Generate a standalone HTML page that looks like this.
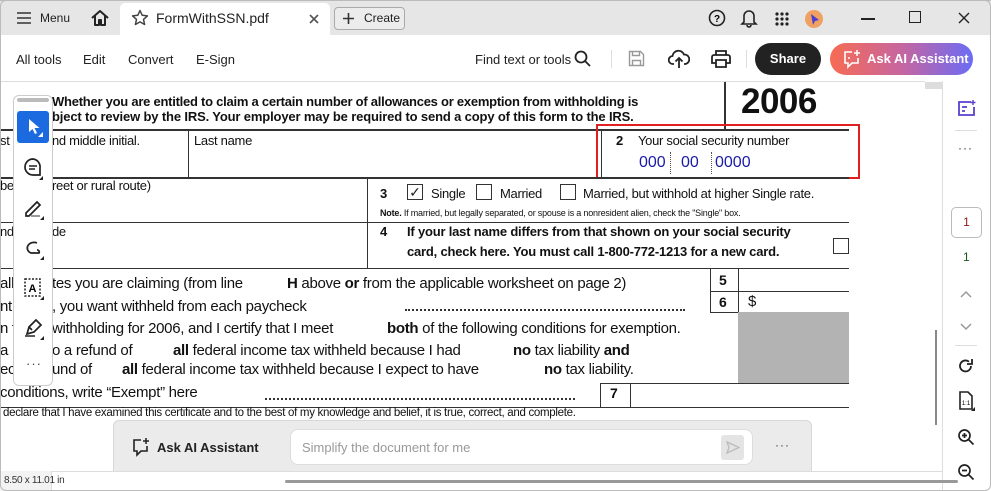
<!DOCTYPE html>
<html><head><meta charset="utf-8"><style>
*{box-sizing:border-box;margin:0;padding:0}
body{width:991px;height:491px;overflow:hidden;background:#fff;font-family:"Liberation Sans",sans-serif;position:relative;color:#222}
.a{position:absolute;white-space:nowrap}
.t{font-size:13px;color:#222}
.d{font-size:14px;color:#111;letter-spacing:-0.3px}
.b{font-weight:bold}
.hl{position:absolute;background:#333;height:1px}
.vl{position:absolute;background:#333;width:1px}
.ic{position:absolute}
</style></head><body>
<!-- title bar -->
<div class="a" style="left:0;top:0;width:991px;height:35px;background:#e6e6e6;border-top:1px solid #bbb"></div>
<svg class="ic" style="left:16px;top:12px" width="16" height="12"><path d="M1 1h14M1 6h14M1 11h14" stroke="#333" stroke-width="1.6"/></svg>
<div class="a t" style="left:40px;top:11px;font-size:12px">Menu</div>
<svg class="ic" style="left:90px;top:9px" width="20" height="18"><path d="M2 9L10 2l8 7M5 7v9h4v-5h2v5h4V7" fill="none" stroke="#222" stroke-width="2" stroke-linejoin="round"/></svg>
<div class="a" style="left:120px;top:3px;width:210px;height:32px;background:#fff;border-radius:5px 5px 0 0"></div>
<svg class="ic" style="left:131px;top:9px" width="18" height="18"><path d="M9 1.5l2.2 4.8 5.2.6-3.9 3.5 1.1 5.1L9 12.9l-4.6 2.6 1.1-5.1L1.6 6.9l5.2-.6z" fill="none" stroke="#444" stroke-width="1.5" stroke-linejoin="round"/></svg>
<div class="a t" style="left:156px;top:10px;font-size:14px">FormWithSSN.pdf</div>
<svg class="ic" style="left:309px;top:14px" width="10" height="10"><path d="M1 1l8 8M9 1l-8 8" stroke="#555" stroke-width="1.6"/></svg>
<div class="a" style="left:334px;top:7px;width:71px;height:23px;border:1px solid #aaa;border-radius:4px;background:#ececec"></div>
<svg class="ic" style="left:343px;top:13px" width="11" height="11"><path d="M5.5 0v11M0 5.5h11" stroke="#333" stroke-width="1.6"/></svg>
<div class="a t" style="left:364px;top:11px;font-size:12px">Create</div>
<svg class="ic" style="left:708px;top:9px" width="18" height="18"><circle cx="9" cy="9" r="7.5" fill="none" stroke="#222" stroke-width="1.6"/><text x="9" y="13" font-size="10" font-weight="bold" text-anchor="middle" font-family="Liberation Sans">?</text></svg>
<svg class="ic" style="left:740px;top:8px" width="18" height="20"><path d="M4 14V8a5 5 0 0110 0v6l2 2H2zM7 17a2 2 0 004 0" fill="none" stroke="#222" stroke-width="1.6"/></svg>
<svg class="ic" style="left:775px;top:12px" width="14" height="14" fill="#222"><circle cx="2" cy="2" r="1.6"/><circle cx="7" cy="2" r="1.6"/><circle cx="12" cy="2" r="1.6"/><circle cx="2" cy="7" r="1.6"/><circle cx="7" cy="7" r="1.6"/><circle cx="12" cy="7" r="1.6"/><circle cx="2" cy="12" r="1.6"/><circle cx="7" cy="12" r="1.6"/><circle cx="12" cy="12" r="1.6"/></svg>
<div class="a" style="left:805px;top:10px;width:18px;height:18px;border-radius:50%;background:#f0a060"><svg width="18" height="18"><path d="M6 4l8 6-4 1-2 4z" fill="#4a3fd0"/></svg></div>
<div class="a" style="left:861px;top:18px;width:14px;height:1.5px;background:#222"></div>
<div class="a" style="left:909px;top:11px;width:12px;height:12px;border:1.5px solid #222"></div>
<svg class="ic" style="left:958px;top:12px" width="12" height="12"><path d="M1 1l10 10M11 1L1 11" stroke="#222" stroke-width="1.4"/></svg>
<!-- toolbar -->
<div class="a t" style="left:16px;top:52px">All tools</div>
<div class="a t" style="left:83px;top:52px">Edit</div>
<div class="a t" style="left:128px;top:52px">Convert</div>
<div class="a t" style="left:196px;top:52px">E-Sign</div>
<div class="a t" style="left:475px;top:52px">Find text or tools</div>
<svg class="ic" style="left:574px;top:50px" width="18" height="18"><circle cx="7" cy="7" r="5.5" fill="none" stroke="#222" stroke-width="1.8"/><path d="M11 11l5 5" stroke="#222" stroke-width="1.8"/></svg>
<div class="a" style="left:611px;top:50px;width:1px;height:18px;background:#ddd"></div>
<svg class="ic" style="left:628px;top:50px" width="17" height="17"><path d="M1.5 1.5h11l3 3v11h-14z M4.5 1.5v4h7v-4M4.5 15.5v-5h8v5" fill="none" stroke="#999" stroke-width="1.4"/></svg>
<svg class="ic" style="left:668px;top:49px" width="22" height="20"><path d="M6 15H5a4 4 0 01-.5-8A6 6 0 0116 5.5a4.5 4.5 0 011 9.5h-1M11 19V9M7.5 12.5L11 9l3.5 3.5" fill="none" stroke="#222" stroke-width="1.8"/></svg>
<svg class="ic" style="left:711px;top:50px" width="20" height="18"><path d="M5 5V1h10v4M3 5h14a2 2 0 012 2v6h-4M5 13H1V7a2 2 0 012-2M5 10h10v7H5z" fill="none" stroke="#222" stroke-width="1.8"/></svg>
<div class="a" style="left:746px;top:50px;width:1px;height:18px;background:#ddd"></div>
<div class="a" style="left:755px;top:43px;width:66px;height:32px;border-radius:16px;background:#222;color:#fff;font-size:13px;font-weight:bold;text-align:center;line-height:32px">Share</div>
<div class="a" style="left:830px;top:43px;width:143px;height:32px;border-radius:16px;background:linear-gradient(90deg,#f76b52,#c666a0,#6b6cf5);color:#fff;font-size:13px;font-weight:bold;line-height:32px;padding-left:37px">Ask AI Assistant</div>
<svg class="ic" style="left:842px;top:49px" width="20" height="20"><path d="M10 3H3v11h3v4l4-4h6v-5" fill="none" stroke="#fff" stroke-width="1.6"/><path d="M15 1v6M12 4h6" stroke="#fff" stroke-width="1.5"/><circle cx="7" cy="9" r="1" fill="#fff"/></svg>
<div class="a" style="left:0;top:81px;width:925px;height:1px;background:#ddd"></div>
<!-- document -->
<div class="a d b" style="left:52px;top:94px;font-size:13px;letter-spacing:-0.25px">Whether you are entitled to claim a certain number of allowances or exemption from withholding is</div>
<div class="a d b" style="left:52px;top:109px;font-size:13px;letter-spacing:-0.15px">bject to review by the IRS. Your employer may be required to send a copy of this form to the IRS.</div>
<div class="vl" style="left:724px;top:82px;height:48px;width:2px"></div>
<div class="a b" style="left:741px;top:82px;font-size:35px;color:#111;letter-spacing:-0.5px">2006</div>
<div class="hl" style="left:0;top:129px;width:849px;height:2px"></div>
<div class="a d" style="left:0;top:133px;font-size:13px">st</div>
<div class="a d" style="left:52px;top:133px;font-size:13px">nd middle initial.</div>
<div class="vl" style="left:188px;top:130px;height:47px"></div>
<div class="a d" style="left:194px;top:133px;font-size:13px">Last name</div>
<div class="vl" style="left:601px;top:130px;height:47px"></div>
<div class="a d b" style="left:616px;top:133px;font-size:13px">2</div>
<div class="a d" style="left:638px;top:133px;font-size:13px">Your social security number</div>
<div class="a" style="left:639px;top:154px;font-size:16px;color:#1a1aa8">000</div>
<div class="a" style="left:681px;top:154px;font-size:16px;color:#1a1aa8">00</div>
<div class="a" style="left:715px;top:154px;font-size:16px;color:#1a1aa8">0000</div>
<div class="a" style="left:670px;top:152px;height:22px;border-left:1px dotted #555"></div>
<div class="a" style="left:711px;top:152px;height:22px;border-left:1px dotted #555"></div>
<div class="a" style="left:596px;top:124px;width:264px;height:55px;border:2px solid #e02020"></div>
<div class="hl" style="left:0;top:177px;width:849px;height:2px"></div>
<div class="a d" style="left:0;top:178px;font-size:13px">be</div>
<div class="a d" style="left:52px;top:178px;font-size:13px">reet or rural route)</div>
<div class="vl" style="left:367px;top:178px;height:90px"></div>
<div class="a d b" style="left:380px;top:186px;font-size:13px">3</div>
<div class="a" style="left:407px;top:184px;width:16px;height:16px;border:1px solid #333;font-size:14px;line-height:14px;text-align:center">✓</div>
<div class="a d" style="left:431px;top:186px;font-size:13px">Single</div>
<div class="a" style="left:476px;top:184px;width:16px;height:16px;border:1px solid #333"></div>
<div class="a d" style="left:500px;top:186px;font-size:13px">Married</div>
<div class="a" style="left:560px;top:184px;width:16px;height:16px;border:1px solid #333"></div>
<div class="a d" style="left:583px;top:186px;font-size:13px">Married, but withhold at higher Single rate.</div>
<div class="a d" style="left:380px;top:208px;font-size:9px;letter-spacing:-0.2px"><b>Note.</b> If married, but legally separated, or spouse is a nonresident alien, check the "Single" box.</div>
<div class="hl" style="left:0;top:222px;width:849px"></div>
<div class="a d" style="left:0;top:224px;font-size:13px">nd</div>
<div class="a d" style="left:52px;top:224px;font-size:13px">de</div>
<div class="a d b" style="left:380px;top:224px;font-size:13px">4</div>
<div class="a d b" style="left:407px;top:224px;font-size:13px;letter-spacing:-0.2px">If your last name differs from that shown on your social security</div>
<div class="a d b" style="left:407px;top:244px;font-size:13px;letter-spacing:-0.2px">card, check here. You must call 1-800-772-1213 for a new card.</div>
<div class="a" style="left:833px;top:238px;width:16px;height:16px;border:1px solid #333"></div>
<div class="hl" style="left:0;top:268px;width:849px"></div>
<div class="vl" style="left:710px;top:268px;height:44px"></div>
<div class="vl" style="left:738px;top:268px;height:44px"></div>
<div class="hl" style="left:710px;top:291px;width:139px"></div>
<div class="hl" style="left:710px;top:312px;width:28px"></div>
<div class="a d b" style="left:719px;top:272px">5</div>
<div class="a d b" style="left:719px;top:294px">6</div>
<div class="a d" style="left:748px;top:293px;font-size:15px">$</div>
<div class="a" style="left:738px;top:312px;width:111px;height:71px;background:#b3b3b3"></div>
<div class="a d" style="left:0;top:275px;font-size:15px">all</div>
<div class="a d" style="left:52px;top:275px;font-size:15px">tes you are claiming (from line</div>
<div class="a d" style="left:287px;top:275px;font-size:15px"><b>H</b> above <b>or</b> from the applicable worksheet on page 2)</div>
<div class="a d" style="left:0;top:298px;font-size:15px">nt</div>
<div class="a d" style="left:52px;top:298px;font-size:15px">, you want withheld from each paycheck</div>
<div class="a" style="left:405px;top:309px;width:280px;border-top:2px dotted #333"></div>
<div class="a d" style="left:0;top:320px;font-size:15px">n f</div>
<div class="a d" style="left:52px;top:320px;font-size:15px">withholding for 2006, and I certify that I meet</div>
<div class="a d" style="left:387px;top:320px;font-size:15px"><b>both</b> of the following conditions for exemption.</div>
<div class="a d" style="left:0;top:342px;font-size:15px">a</div>
<div class="a d" style="left:52px;top:342px;font-size:15px">o a refund of</div>
<div class="a d" style="left:173px;top:342px;font-size:15px"><b>all</b> federal income tax withheld because I had</div>
<div class="a d" style="left:513px;top:342px;font-size:15px"><b>no</b> tax liability <b>and</b></div>
<div class="a d" style="left:0;top:361px;font-size:15px">ec</div>
<div class="a d" style="left:52px;top:361px;font-size:15px">und of</div>
<div class="a d" style="left:122px;top:361px;font-size:15px"><b>all</b> federal income tax withheld because I expect to have</div>
<div class="a d" style="left:544px;top:361px;font-size:15px"><b>no</b> tax liability.</div>
<div class="hl" style="left:600px;top:383px;width:249px"></div>
<div class="vl" style="left:600px;top:383px;height:24px"></div>
<div class="vl" style="left:630px;top:383px;height:24px"></div>
<div class="a d b" style="left:610px;top:385px">7</div>
<div class="a d" style="left:0;top:384px;font-size:15px">conditions, write “Exempt” here</div>
<div class="a" style="left:265px;top:398px;width:310px;border-top:2px dotted #333"></div>
<div class="hl" style="left:0;top:407px;width:849px"></div>
<div class="a d" style="left:3px;top:407px;font-size:11.5px;letter-spacing:-0.3px">declare that I have examined this certificate and to the best of my knowledge and belief, it is true, correct, and complete.</div>
<!-- floating tools -->
<div class="a" style="left:13px;top:95px;width:40px;height:291px;background:#fff;border:1px solid #ccc;border-radius:6px"></div>
<div class="a" style="left:17px;top:98px;width:32px;height:4px;border-radius:2px;background:#bbb"></div>
<div class="a" style="left:17px;top:111px;width:32px;height:32px;border-radius:3px;background:#1b6ae0"></div>
<svg class="ic" style="left:27px;top:118px" width="16" height="22"><path d="M2 1v13l3.5-3 2.5 5 2-1-2.5-5h5z" fill="#fff"/><path d="M16 14v5h-5z" fill="#fff"/></svg>
<svg class="ic" style="left:22px;top:156px" width="24" height="24"><path d="M11 3a8 8 0 100 16h7v-7A8 8 0 0011 3z" fill="none" stroke="#222" stroke-width="1.7"/><path d="M7 10h8M7 13h6" stroke="#222" stroke-width="1.5"/><path d="M21 20v4h-4z" fill="#222"/></svg>
<svg class="ic" style="left:22px;top:196px" width="24" height="24"><path d="M4 17l11-11 3 3-11 11H4z" fill="none" stroke="#222" stroke-width="1.7"/><path d="M9 20h9" stroke="#999" stroke-width="2"/><path d="M22 20v4h-4z" fill="#222"/></svg>
<svg class="ic" style="left:22px;top:236px" width="24" height="24"><path d="M15 7a6 5 0 10-6 10h8a2 2 0 00-2-3" fill="none" stroke="#222" stroke-width="1.7"/><path d="M22 20v4h-4z" fill="#222"/></svg>
<svg class="ic" style="left:22px;top:276px" width="24" height="24"><rect x="3" y="3" width="15" height="17" fill="none" stroke="#222" stroke-width="1.5" stroke-dasharray="2 1.5"/><text x="10.5" y="16" font-size="11" font-weight="bold" text-anchor="middle" font-family="Liberation Sans">A</text><path d="M22 20v4h-4z" fill="#222"/></svg>
<svg class="ic" style="left:22px;top:316px" width="24" height="24"><path d="M5 18l2-7 7-7 5 5-7 7zM7 11l3 3" fill="none" stroke="#222" stroke-width="1.7"/><path d="M3 20h10" stroke="#222" stroke-width="1.5"/><path d="M22 20v4h-4z" fill="#222"/></svg>
<div class="a" style="left:26px;top:356px;font-size:13px;color:#444;letter-spacing:1px">···</div>
<!-- scrollbar -->
<div class="a" style="left:925px;top:82px;width:17px;height:7px;background:#ddd"></div>
<div class="a" style="left:935px;top:330px;width:2px;height:95px;background:#888"></div>
<!-- right panel -->
<div class="a" style="left:942px;top:81px;width:49px;height:410px;background:#fff;border-left:1px solid #ddd"></div>
<svg class="ic" style="left:957px;top:99px" width="20" height="18"><path d="M14 3H2v13h15V8" fill="none" stroke="#5a3fd0" stroke-width="1.8"/><path d="M5 8h5M5 12h3" stroke="#5a3fd0" stroke-width="1.8"/><path d="M16 1v5M13.5 3.5h5" stroke="#5a3fd0" stroke-width="1.4"/></svg>
<div class="a" style="left:955px;top:130px;width:22px;height:1px;background:#ddd"></div>
<div class="a" style="left:958px;top:141px;font-size:12px;color:#333;letter-spacing:1px">···</div>
<div class="a" style="left:951px;top:207px;width:31px;height:31px;border:1px solid #bbb;border-radius:5px;font-size:12px;text-align:center;line-height:29px;color:#8a1a1a">1</div>
<div class="a" style="left:963px;top:250px;font-size:12px;color:#1a5a1a">1</div>
<svg class="ic" style="left:960px;top:290px" width="12" height="8"><path d="M1 7l5-5 5 5" fill="none" stroke="#999" stroke-width="1.5"/></svg>
<svg class="ic" style="left:960px;top:323px" width="12" height="8"><path d="M1 1l5 5 5-5" fill="none" stroke="#999" stroke-width="1.5"/></svg>
<div class="a" style="left:955px;top:345px;width:22px;height:1px;background:#ddd"></div>
<svg class="ic" style="left:957px;top:357px" width="18" height="18"><path d="M14 9a5.5 5.5 0 11-2-4.3" fill="none" stroke="#222" stroke-width="1.8"/><path d="M15 2v5h-5" fill="none" stroke="#222" stroke-width="1.8"/></svg>
<svg class="ic" style="left:958px;top:391px" width="18" height="20"><path d="M2 1h8l4 4v13H2z" fill="none" stroke="#222" stroke-width="1.6"/><text x="8" y="14" font-size="6" font-family="Liberation Sans" text-anchor="middle">1:1</text><path d="M17 16v4h-4z" fill="#222"/></svg>
<svg class="ic" style="left:957px;top:428px" width="18" height="18"><circle cx="7.5" cy="7.5" r="5.5" fill="none" stroke="#222" stroke-width="1.7"/><path d="M11.5 11.5l5 5M5 7.5h5M7.5 5v5" stroke="#222" stroke-width="1.7"/></svg>
<svg class="ic" style="left:957px;top:463px" width="18" height="18"><circle cx="7.5" cy="7.5" r="5.5" fill="none" stroke="#222" stroke-width="1.7"/><path d="M11.5 11.5l5 5M5 7.5h5" stroke="#222" stroke-width="1.7"/></svg>
<!-- AI bar -->
<div class="a" style="left:113px;top:420px;width:699px;height:51px;background:#ebebeb;border:1px solid #d8d8d8;border-bottom:none;border-radius:6px 6px 0 0"></div>
<svg class="ic" style="left:131px;top:437px" width="20" height="20"><path d="M10 3H3v11h3v4l4-4h6v-5" fill="none" stroke="#222" stroke-width="1.6"/><path d="M15 1v6M12 4h6" stroke="#222" stroke-width="1.5"/></svg>
<div class="a b" style="left:157px;top:440px;font-size:13px;color:#222">Ask AI Assistant</div>
<div class="a" style="left:290px;top:429px;width:463px;height:36px;background:#fff;border:1px solid #ddd;border-radius:8px"></div>
<div class="a" style="left:302px;top:440px;font-size:13px;color:#999">Simplify the document for me</div>
<div class="a" style="left:721px;top:435px;width:23px;height:25px;background:#e4e4e4;border-radius:3px"></div>
<svg class="ic" style="left:726px;top:441px" width="14" height="13"><path d="M1 1l12 5.5L1 12l2-5.5z" fill="none" stroke="#bbb" stroke-width="1.3"/></svg>
<div class="a" style="left:775px;top:438px;font-size:12px;color:#444;letter-spacing:1px">···</div>
<!-- status -->
<div class="a" style="left:0;top:471px;width:942px;height:20px;background:#fff;border-top:1px solid #ddd"></div>
<div class="a" style="left:0;top:471px;width:52px;height:20px;border-right:1px solid #ddd;background:#f3f3f3"></div>
<div class="a" style="left:4px;top:475px;font-size:10px;color:#333;letter-spacing:-0.3px">8.50 x 11.01 in</div>
<div class="a" style="left:285px;top:480px;width:673px;height:3px;background:#999;border-radius:2px"></div>
<div class="a" style="left:0;top:0;width:991px;height:491px;border:1px solid #bbb;border-radius:6px;pointer-events:none"></div>
</body></html>
